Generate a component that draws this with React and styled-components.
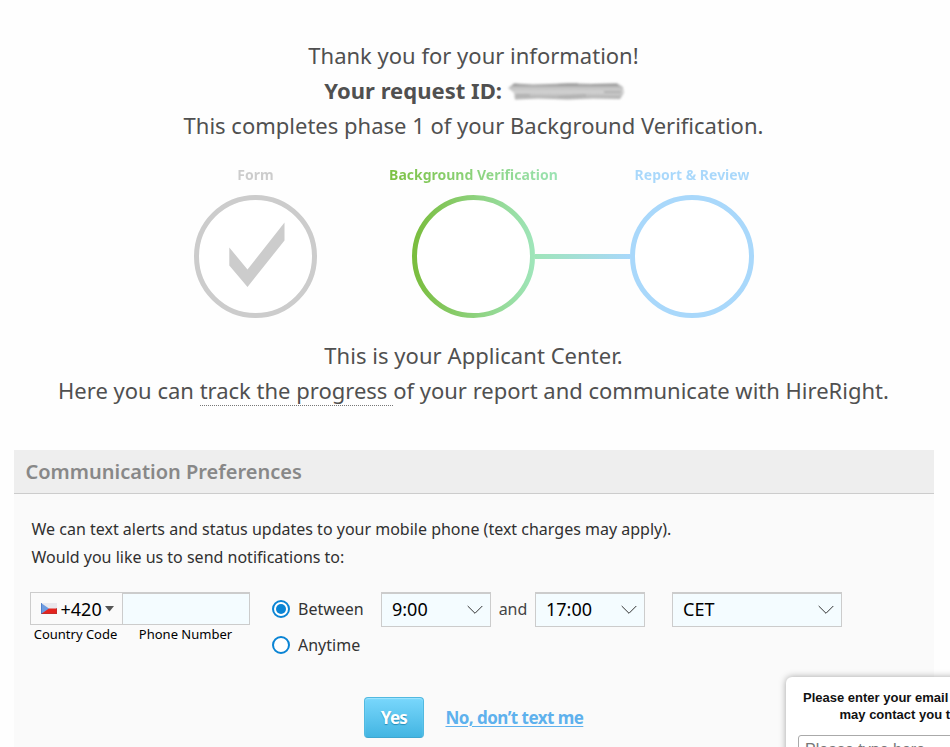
import React from "react";
import styled, { createGlobalStyle } from "styled-components";

const Global = createGlobalStyle`
  *, *::before, *::after { box-sizing: border-box; }
  html, body { margin: 0; height: 747px; overflow: hidden; background: #fefefe; }
  body { font-family: "Noto Sans", sans-serif; color: #505050; }
`;

const Page = styled.main`
  position: relative;
  width: 950px;
  height: 747px;
  overflow: hidden;
  padding: 38px 16px 0 14px;
`;

const Message = styled.section`
  display: flex;
  flex-direction: column;
  align-items: center;
  margin-left: -1px;
  font-size: 22px;
  line-height: 35px;
  white-space: pre;
`;

const MessageLine = styled.div`
  display: flex;
  align-items: center;
  height: 35px;
  font-weight: ${(p) => (p.$bold ? 700 : 400)};
  letter-spacing: ${(p) => p.$spacing || "normal"};
`;

const Smudge = styled.svg`
  width: 115px;
  height: 24px;
  overflow: visible;
`;

const Steps = styled.section`
  display: flex;
  justify-content: center;
  height: 151px;
  margin: 22px 0 22px;
`;

const Step = styled.div`
  display: flex;
  flex-direction: column;
  align-items: center;
  width: ${(p) => p.$width || "123px"};
`;

const StepLabel = styled.div`
  height: 20px;
  margin-bottom: 10px;
  font-size: 14px;
  line-height: 20px;
  font-weight: 700;
  white-space: nowrap;
  color: transparent;
  background: ${(p) => p.$fill};
  background-clip: text;
`;

const Ring = styled.svg`
  display: block;
  width: ${(p) => p.$width || "123px"};
  height: 123px;
  flex: none;
`;

const Connector = styled.div`
  width: 95px;
  height: 5px;
  margin: 89px 0 0;
  background: ${(p) => p.$fill || "transparent"};
`;

const TrackLink = styled.a`
  height: 31px;
  line-height: 30px;
  border-bottom: 1px dotted #777;
`;

const Panel = styled.section`
  height: 320px;
  margin-top: 42px;
  background: #fafafa;
`;

const PanelTitle = styled.h2`
  height: 44px;
  margin: 0;
  padding-left: 11.5px;
  font-size: 20px;
  line-height: 43px;
  font-weight: 600;
  color: #888;
  background: #eee;
  border-bottom: 1px solid #ccc;
`;

const PanelText = styled.p`
  margin: 0;
  padding: 21px 0 0 17.5px;
  font-size: 16px;
  line-height: 28px;
  color: #303030;
  white-space: pre;
`;

const Controls = styled.div`
  display: flex;
  align-items: flex-start;
  padding: 21px 0 0 16px;
`;

const PhoneBox = styled.div`
  display: flex;
  width: 220px;
  height: 33px;
  border: 1px solid #ccc;
`;

const CountryCode = styled.div`
  display: flex;
  align-items: center;
  width: 92px;
  padding-left: 10px;
  font-size: 18px;
  color: #000;
  border-right: 1px solid #ccc;
`;

const CodeText = styled.span`
  margin: 0 3.5px;
`;

const PhoneInput = styled.div`
  flex: 1;
  background: #f4fcff;
  border-top: 1px solid #ccc;
`;

const Captions = styled.div`
  display: grid;
  grid-template-columns: 91px 129px;
  font-size: 13px;
  line-height: 18px;
  color: #000;
  text-align: center;
`;

const RadioList = styled.div`
  display: grid;
  grid-auto-rows: 36px;
  width: 109px;
  margin: -1px 0 0 22px;
`;

const RadioRow = styled.label`
  display: flex;
  align-items: center;
  gap: 8px;
  font-size: 16px;
  color: #333;
`;

const Radio = styled.span`
  display: grid;
  place-items: center;
  width: 18px;
  height: 18px;
  border: 2px solid #0a84d4;
  border-radius: 50%;
  background: #fff;
  &::after {
    content: "";
    width: 10px;
    height: 10px;
    border-radius: 50%;
    background: ${(p) => (p.$on ? "#0a84d4" : "transparent")};
  }
`;

const Select = styled.div`
  display: flex;
  align-items: center;
  justify-content: space-between;
  width: ${(p) => p.$width};
  height: 35px;
  padding: 0 7.5px 2px 10px;
  font-size: 18px;
  color: #000;
  background: #f4fcff;
  border: 1px solid #ccc;
  border-top-width: 2px;
  margin-left: ${(p) => p.$gap || "0"};
  svg { margin-top: 2px; }
`;

const Joiner = styled.span`
  width: 44px;
  font-size: 16px;
  line-height: 34px;
  text-align: center;
  color: #444;
`;

const Actions = styled.div`
  display: flex;
  align-items: center;
  gap: 21.5px;
  padding: 34px 0 0 350px;
`;

const YesButton = styled.button`
  width: 60px;
  height: 41px;
  padding: 0;
  font: 700 17px "Noto Sans", sans-serif;
  letter-spacing: -0.7px;
  color: #fff;
  text-shadow: 0 1px 1px #278db8;
  background: linear-gradient(#79d7fc, #43b5e2);
  border: 1px solid #51b9e0;
  border-bottom-color: #3ea6d0;
  border-radius: 4px;
  box-shadow: inset 0 1px 1px #a0e5ff;
`;

const DeclineLink = styled.a`
  font-size: 17px;
  font-weight: 700;
  line-height: 24px;
  letter-spacing: -0.54px;
  color: #5eb1ed;
  text-decoration: underline;
  text-decoration-thickness: 1px;
  text-underline-offset: 2px;
`;

const ChatPopup = styled.aside`
  position: absolute;
  left: 786px;
  top: 677px;
  width: 300px;
  height: 180px;
  padding: 12px;
  background: #fff;
  border-radius: 6px;
  box-shadow: 0 0 7px rgba(0, 0, 0, 0.35);
`;

const ChatPrompt = styled.p`
  margin: 0;
  padding-left: 5px;
  font: 700 13px/17px "Liberation Sans", Arial, sans-serif;
  color: #111;
  white-space: pre;
`;

const ChatPromptTail = styled.span`
  padding-left: 36.5px;
`;

const ChatInput = styled.div`
  height: 34px;
  margin-top: 12px;
  padding: 4px 6px;
  font: 16px/20px "Liberation Sans", Arial, sans-serif;
  color: #777;
  border: 1px solid #aaa;
  border-radius: 3px;
`;

const Chevron = () => (
  <svg width="16" height="10" viewBox="0 0 16 10" fill="none" stroke="#333" strokeWidth="1">
    <path d="M.7 1 8 8.3 15.3 1" />
  </svg>
);

const Flag = () => (
  <svg width="16" height="11" viewBox="0 0 16 11">
    <path fill="#e9e9ee" d="M0 0h16v6H0z" />
    <path fill="#e3241f" d="M0 5.5h16V11H0z" />
    <path fill="#6d9be0" d="M0 0v11l8-5.5z" />
    <path fill="none" stroke="#a33" strokeOpacity=".5" d="M0 10.5h15.5V5" />
    <path fill="none" stroke="#3d6fc0" strokeOpacity=".6" d="M.5 0v11" />
  </svg>
);

const grey = "linear-gradient(#ccc, #ccc)";
const green = "linear-gradient(90deg, #7cc142, #9be3b4)";
const blue = "linear-gradient(#a9d8fb, #a9d8fb)";

export default function App() {
  return (
    <>
      <Global />
      <Page>
        <Message>
          <MessageLine>Thank you for your information!</MessageLine>
          <MessageLine $bold $spacing="0.03px">
            {"Your request ID: "}
            <Smudge viewBox="0 0 115 24">
              <defs>
                <filter id="soft" x="-10%" y="-30%" width="120%" height="160%">
                  <feGaussianBlur stdDeviation="1.2 .8" />
                </filter>
                <linearGradient id="ink" x1="0" x2="0" y1="0" y2="1">
                  <stop offset="0" stopColor="#8f8f8f" />
                  <stop offset=".25" stopColor="#c2c2c2" />
                  <stop offset=".55" stopColor="#d2d2d2" />
                  <stop offset=".8" stopColor="#bcbcbc" />
                  <stop offset="1" stopColor="#adadad" />
                </linearGradient>
              </defs>
              <g filter="url(#soft)">
                <path fill="url(#ink)" d="M0 9 6 4.5 25 5.5 60 4.5 85 5 109 4.5 115 8 116 14 112 20 85 19.5 60 20.5 30 19.5 7 20.5 6 14z" />
                <path fill="none" stroke="#888" d="M5 5.5h5M50 5.5 70 5M84 5.5 109 5.5" />
                <path fill="none" stroke="#b0b0b0" strokeWidth="2" d="M96 13h17M8 16h14M50 18 78 16" />
              </g>
            </Smudge>
          </MessageLine>
          <MessageLine>This completes phase 1 of your Background Verification.</MessageLine>
        </Message>

        <Steps>
          <Step>
            <StepLabel $fill={grey}>Form</StepLabel>
            <Ring viewBox="0 0 123 123">
              <circle cx="61.5" cy="61.5" r="59" fill="#fff" stroke="#ccc" strokeWidth="5" />
              <path fill="#ccc" d="M35.3 52.5 53.5 74.5 90.5 27.5v18L53.5 92 35.3 70.5z" />
            </Ring>
          </Step>
          <Connector />
          <Step>
            <StepLabel $fill={green}>Background Verification</StepLabel>
            <Ring viewBox="0 0 123 123">
              <defs>
                <linearGradient id="progress">
                  <stop offset="0" stopColor="#7abd3e" />
                  <stop offset="1" stopColor="#9fe5b9" />
                </linearGradient>
              </defs>
              <circle cx="61.5" cy="61.5" r="59" fill="#fff" stroke="url(#progress)" strokeWidth="5" />
            </Ring>
          </Step>
          <Connector $fill="linear-gradient(90deg, #9fe5b9, #a9d8fb)" />
          <Step $width="124px">
            <StepLabel $fill={blue}>Report &amp; Review</StepLabel>
            <Ring $width="124px" viewBox="0 0 124 123">
              <ellipse cx="62" cy="61.5" rx="59.5" ry="59" fill="#fff" stroke="#a9d8fb" strokeWidth="5" />
            </Ring>
          </Step>
        </Steps>

        <Message>
          <MessageLine $spacing="0.05px">This is your Applicant Center.</MessageLine>
          <MessageLine>
            {"Here you can "}
            <TrackLink>{"track the progress "}</TrackLink>
            of your report and communicate with HireRight.
          </MessageLine>
        </Message>

        <Panel>
          <PanelTitle>Communication Preferences</PanelTitle>
          <PanelText>
            We can text alerts and status updates to your mobile phone (text charges may apply).
            {"\n"}Would you like us to send notifications to:
          </PanelText>
          <Controls>
            <div>
              <PhoneBox>
                <CountryCode>
                  <Flag />
                  <CodeText>+420</CodeText>
                  <svg width="9" height="6" viewBox="0 0 9 6">
                    <path fill="#555" d="M0 0h9L4.5 5.5z" />
                  </svg>
                </CountryCode>
                <PhoneInput />
              </PhoneBox>
              <Captions>
                <span>Country Code</span>
                <span>Phone Number</span>
              </Captions>
            </div>
            <RadioList>
              <RadioRow><Radio $on />Between</RadioRow>
              <RadioRow><Radio />Anytime</RadioRow>
            </RadioList>
            <Select $width="110px">9:00<Chevron /></Select>
            <Joiner>and</Joiner>
            <Select $width="110px">17:00<Chevron /></Select>
            <Select $width="170px" $gap="27px">CET<Chevron /></Select>
          </Controls>
          <Actions>
            <YesButton>Yes</YesButton>
            <DeclineLink>No, don’t text me</DeclineLink>
          </Actions>
        </Panel>

        <ChatPopup>
          <ChatPrompt>
            Please enter your email so we{"\n"}
            <ChatPromptTail>may contact you today</ChatPromptTail>
          </ChatPrompt>
          <ChatInput>Please type here...</ChatInput>
        </ChatPopup>
      </Page>
    </>
  );
}
